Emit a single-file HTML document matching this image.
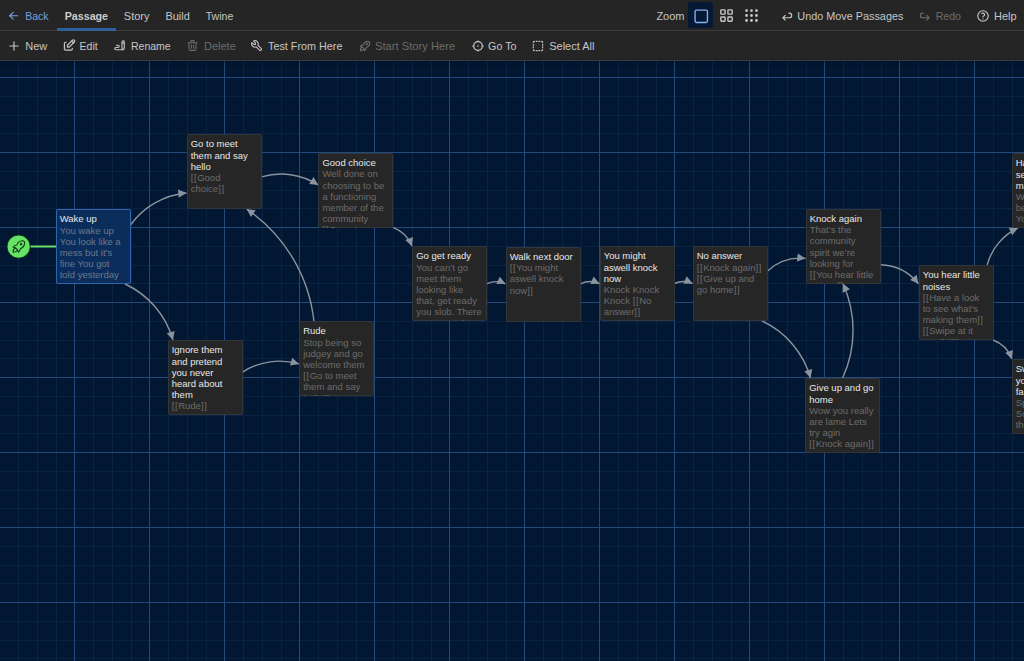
<!DOCTYPE html><html><head><meta charset='utf-8'><style>
*{box-sizing:border-box}
html,body{margin:0;padding:0;width:1024px;height:661px;overflow:hidden;background:#021731;font-family:"Liberation Sans",sans-serif}
.bar{position:absolute;left:0;width:1024px;background:#252525}
.t{position:absolute;white-space:nowrap;font-size:11px;line-height:13px;color:#c6c6c6}
.dim{color:#6b6b6b}
.ic{position:absolute;fill:none;stroke:#c6c6c6;stroke-width:2;stroke-linecap:round;stroke-linejoin:round}
.ic.dim{stroke:#6b6b6b}
.p{position:absolute;width:75px;height:75px;background:#262626;border-radius:2px;overflow:hidden;padding:4.4px 4.2px;font-size:9.5px;line-height:11.2px;white-space:nowrap;box-shadow:inset 0 0 0 1px rgba(130,150,180,0.14)}
.p .h{color:#e8e8e8;font-size:9.5px}
.p .e{color:#6c6c6c}
.b{letter-spacing:.6px}
.p.sel{background:#0a2d5b;box-shadow:inset 0 0 0 1px #3065b0}
.p.sel .e{color:#6a788c}
</style></head><body>
<svg style='position:absolute;left:0;top:0' width='1024' height='661' viewBox='0 0 1024 661'>
<path d='M18.5 61V661 M37.5 61V661 M56.5 61V661 M93.5 61V661 M112.5 61V661 M131.5 61V661 M168.5 61V661 M187.5 61V661 M206.5 61V661 M243.5 61V661 M262.5 61V661 M281.5 61V661 M318.5 61V661 M337.5 61V661 M356.5 61V661 M393.5 61V661 M412.5 61V661 M431.5 61V661 M468.5 61V661 M487.5 61V661 M506.5 61V661 M543.5 61V661 M562.5 61V661 M581.5 61V661 M618.5 61V661 M637.5 61V661 M656.5 61V661 M693.5 61V661 M712.5 61V661 M731.5 61V661 M768.5 61V661 M787.5 61V661 M806.5 61V661 M843.5 61V661 M862.5 61V661 M881.5 61V661 M918.5 61V661 M937.5 61V661 M956.5 61V661 M993.5 61V661 M1012.5 61V661 M0 96.5H1024 M0 115.5H1024 M0 133.5H1024 M0 171.5H1024 M0 190.5H1024 M0 208.5H1024 M0 246.5H1024 M0 265.5H1024 M0 283.5H1024 M0 321.5H1024 M0 340.5H1024 M0 358.5H1024 M0 396.5H1024 M0 415.5H1024 M0 433.5H1024 M0 471.5H1024 M0 490.5H1024 M0 508.5H1024 M0 546.5H1024 M0 565.5H1024 M0 583.5H1024 M0 621.5H1024 M0 640.5H1024 M0 658.5H1024' stroke='#0b2242' stroke-width='1' fill='none'/>
<path d='M-0.5 61V661 M74.5 61V661 M149.5 61V661 M224.5 61V661 M299.5 61V661 M374.5 61V661 M449.5 61V661 M524.5 61V661 M599.5 61V661 M674.5 61V661 M749.5 61V661 M824.5 61V661 M899.5 61V661 M974.5 61V661 M0 77.5H1024 M0 152.5H1024 M0 227.5H1024 M0 302.5H1024 M0 377.5H1024 M0 452.5H1024 M0 527.5H1024 M0 602.5H1024' stroke='#234a7c' stroke-width='1' fill='none'/>
<defs><marker id='ah' markerUnits='userSpaceOnUse' markerWidth='12' markerHeight='12' refX='10' refY='6' orient='auto' viewBox='0 0 12 12'><path d='M1.8,1.9 L10,6 L1.8,10.1 z' fill='#8b939e'/></marker></defs>
<path d='M130.50,225.03 A77.43,77.43 0 0 1 186.50,192.97' stroke='#8b939e' stroke-width='1.4' fill='none' marker-end='url(#ah)'/>
<path d='M125.06,284.00 A88.41,88.41 0 0 1 172.94,340.00' stroke='#8b939e' stroke-width='1.4' fill='none' marker-end='url(#ah)'/>
<path d='M261.50,176.84 A68.79,68.79 0 0 1 318.25,184.91' stroke='#8b939e' stroke-width='1.4' fill='none' marker-end='url(#ah)'/>
<path d='M393.25,227.55 A31.74,31.74 0 0 1 412.00,246.20' stroke='#8b939e' stroke-width='1.4' fill='none' marker-end='url(#ah)'/>
<path d='M487.00,283.70 A22.20,22.20 0 0 1 505.50,283.80' stroke='#8b939e' stroke-width='1.4' fill='none' marker-end='url(#ah)'/>
<path d='M580.50,283.80 A22.80,22.80 0 0 1 599.50,283.70' stroke='#8b939e' stroke-width='1.4' fill='none' marker-end='url(#ah)'/>
<path d='M674.50,283.50 A21.60,21.60 0 0 1 692.50,283.50' stroke='#8b939e' stroke-width='1.4' fill='none' marker-end='url(#ah)'/>
<path d='M767.50,271.06 A48.05,48.05 0 0 1 805.50,258.44' stroke='#8b939e' stroke-width='1.4' fill='none' marker-end='url(#ah)'/>
<path d='M761.96,321.00 A89.87,89.87 0 0 1 810.54,378.00' stroke='#8b939e' stroke-width='1.4' fill='none' marker-end='url(#ah)'/>
<path d='M880.50,264.75 A50.98,50.98 0 0 1 918.50,283.75' stroke='#8b939e' stroke-width='1.4' fill='none' marker-end='url(#ah)'/>
<path d='M842.61,378.00 A113.40,113.40 0 0 0 842.89,283.50' stroke='#8b939e' stroke-width='1.4' fill='none' marker-end='url(#ah)'/>
<path d='M313.94,321.00 A156.85,156.85 0 0 0 246.56,209.00' stroke='#8b939e' stroke-width='1.4' fill='none' marker-end='url(#ah)'/>
<path d='M242.50,372.08 A68.50,68.50 0 0 1 299.00,363.92' stroke='#8b939e' stroke-width='1.4' fill='none' marker-end='url(#ah)'/>
<path d='M987.14,265.00 A57.71,57.71 0 0 1 1017.86,228.00' stroke='#8b939e' stroke-width='1.4' fill='none' marker-end='url(#ah)'/>
<path d='M993.10,340.00 A32.07,32.07 0 0 1 1011.90,359.00' stroke='#8b939e' stroke-width='1.4' fill='none' marker-end='url(#ah)'/>
<path d='M29 246.5H57' stroke='#66e066' stroke-width='2'/>
<circle cx='18.6' cy='246.6' r='11.6' fill='#66e266' stroke='#03200a' stroke-width='0.8'/>
<g transform='translate(10.26,237.86) scale(0.72)' fill='none' stroke='#0d3d12' stroke-width='1.5' stroke-linecap='round' stroke-linejoin='round'><path d='M4 13a8 8 0 0 1 7 7a6 6 0 0 0 3 -5a9 9 0 0 0 6 -8a3 3 0 0 0 -3 -3a9 9 0 0 0 -8 6a6 6 0 0 0 -5 3'/><path d='M7 14a6 6 0 0 0 -3 6a6 6 0 0 0 6 -3'/><circle cx='15' cy='9' r='1'/></g>
</svg>
<div class='p sel' style='left:55.5px;top:209px'><div class='h'>Wake up</div><div class='e'>You wake up</div><div class='e'>You look like a</div><div class='e'>mess but it’s</div><div class='e'>fine You got</div><div class='e'>told yesterday</div></div>
<div class='p' style='left:186.5px;top:134px'><div class='h'>Go to meet</div><div class='h'>them and say</div><div class='h'>hello</div><div class='e'><span class='b'>[[</span>Good</div><div class='e'>choice<span class='b'>]]</span></div></div>
<div class='p' style='left:318.25px;top:152.75px'><div class='h'>Good choice</div><div class='e'>Well done on</div><div class='e'>choosing to be</div><div class='e'>a functioning</div><div class='e'>member of the</div><div class='e'>community</div><div class='e'><span class='b'>[[</span>Go get</div></div>
<div class='p' style='left:412.0px;top:246px'><div class='h'>Go get ready</div><div class='e'>You can’t go</div><div class='e'>meet them</div><div class='e'>looking like</div><div class='e'>that, get ready</div><div class='e'>you slob. There</div><div class='e'><span style='padding-left:46px'>l</span></div></div>
<div class='p' style='left:505.5px;top:246.5px'><div class='h'>Walk next door</div><div class='e'><span class='b'>[[</span>You might</div><div class='e'>aswell knock</div><div class='e'>now<span class='b'>]]</span></div></div>
<div class='p' style='left:599.5px;top:246px'><div class='h'>You might</div><div class='h'>aswell knock</div><div class='h'>now</div><div class='e'>Knock Knock</div><div class='e'>Knock <span class='b'>[[</span>No</div><div class='e'>answer<span class='b'>]]</span></div></div>
<div class='p' style='left:692.5px;top:246px'><div class='h'>No answer</div><div class='e'><span class='b'>[[</span>Knock again<span class='b'>]]</span></div><div class='e'><span class='b'>[[</span>Give up and</div><div class='e'>go home<span class='b'>]]</span></div></div>
<div class='p' style='left:805.5px;top:208.5px'><div class='h'>Knock again</div><div class='e'>That’s the</div><div class='e'>community</div><div class='e'>spirit we’re</div><div class='e'>looking for</div><div class='e'><span class='b'>[[</span>You hear little</div><div class='e'>noises<span class='b'>]]</span></div></div>
<div class='p' style='left:918.5px;top:265px'><div class='h'>You hear little</div><div class='h'>noises</div><div class='e'><span class='b'>[[</span>Have a look</div><div class='e'>to see what’s</div><div class='e'>making them<span class='b'>]]</span></div><div class='e'><span class='b'>[[</span>Swipe at it</div><div class='e'>you fail<span class='b'>]]</span></div></div>
<div class='p' style='left:1011.5px;top:153px'><div class='h'>Have a look to</div><div class='h'>see what’s</div><div class='h'>making them</div><div class='e'>Well</div><div class='e'>be</div><div class='e'>You</div></div>
<div class='p' style='left:1011.5px;top:359px'><div class='h'>Swipe at it</div><div class='h'>you</div><div class='h'>fail</div><div class='e'>Spooky</div><div class='e'>Something</div><div class='e'>them</div></div>
<div class='p' style='left:167.5px;top:340px'><div class='h'>Ignore them</div><div class='h'>and pretend</div><div class='h'>you never</div><div class='h'>heard about</div><div class='h'>them</div><div class='e'><span class='b'>[[</span>Rude<span class='b'>]]</span></div></div>
<div class='p' style='left:299.0px;top:321px'><div class='h'>Rude</div><div class='e'>Stop being so</div><div class='e'>judgey and go</div><div class='e'>welcome them</div><div class='e'><span class='b'>[[</span>Go to meet</div><div class='e'>them and say</div><div class='e'>hello<span class='b'>]]</span></div></div>
<div class='p' style='left:805.0px;top:378px'><div class='h'>Give up and go</div><div class='h'>home</div><div class='e'>Wow you really</div><div class='e'>are lame Lets</div><div class='e'>try agin</div><div class='e'><span class='b'>[[</span>Knock again<span class='b'>]]</span></div></div>
<div class='bar' style='top:0;height:30px'></div>
<div class='bar' style='top:30px;height:1px;background:#3a3a3a'></div>
<div class='bar' style='top:31px;height:29px'></div>
<div class='bar' style='top:60px;height:1px;background:#363b44;box-shadow:0 2px 4px rgba(0,0,0,0.75)'></div>
<div style='position:absolute;left:56.5px;top:28.4px;width:59.5px;height:2.2px;background:#2f5e9c'></div>
<svg class='ic ' style='left:7.35px;top:8.75px;stroke:#74a0dc' width='13.5' height='13.5' viewBox='0 0 24 24'><path d='M5 12l14 0'/><path d='M5 12l6 6'/><path d='M5 12l6 -6'/></svg>
<div class='t ' style='left:25.2px;top:9.50px;color:#74a0dc;font-size:10.5px'>Back</div>
<div class='t ' style='left:64.7px;top:9.50px;font-weight:bold;font-size:10.7px;color:#cdcdcd'>Passage</div>
<div class='t ' style='left:123.8px;top:9.50px;'>Story</div>
<div class='t ' style='left:165.4px;top:9.50px;'>Build</div>
<div class='t ' style='left:205.7px;top:9.50px;font-size:10.6px'>Twine</div>
<div class='t ' style='left:656.4px;top:9.50px;'>Zoom</div>
<div style='position:absolute;left:688.2px;top:2.4px;width:24.9px;height:25.8px;background:#061934;border-radius:3px'></div>
<svg class='ic ' style='left:692.75px;top:7.65px;stroke:#86b0ee' width='16.5' height='16.5' viewBox='0 0 24 24'><path d='M3 5a2 2 0 0 1 2 -2h14a2 2 0 0 1 2 2v14a2 2 0 0 1 -2 2h-14a2 2 0 0 1 -2 -2z'/></svg>
<svg class='ic ' style='left:718.00px;top:6.80px;' width='17' height='17' viewBox='0 0 24 24'><path d='M4 5a1 1 0 0 1 1 -1h4a1 1 0 0 1 1 1v4a1 1 0 0 1 -1 1h-4a1 1 0 0 1 -1 -1z'/><path d='M14 5a1 1 0 0 1 1 -1h4a1 1 0 0 1 1 1v4a1 1 0 0 1 -1 1h-4a1 1 0 0 1 -1 -1z'/><path d='M4 15a1 1 0 0 1 1 -1h4a1 1 0 0 1 1 1v4a1 1 0 0 1 -1 1h-4a1 1 0 0 1 -1 -1z'/><path d='M14 15a1 1 0 0 1 1 -1h4a1 1 0 0 1 1 1v4a1 1 0 0 1 -1 1h-4a1 1 0 0 1 -1 -1z'/></svg>
<svg class='ic ' style='left:743.30px;top:7.10px;' width='17' height='17' viewBox='0 0 24 24'><circle cx='5' cy='5' r='1'/><circle cx='12' cy='5' r='1'/><circle cx='19' cy='5' r='1'/><circle cx='5' cy='12' r='1'/><circle cx='12' cy='12' r='1'/><circle cx='19' cy='12' r='1'/><circle cx='5' cy='19' r='1'/><circle cx='12' cy='19' r='1'/><circle cx='19' cy='19' r='1'/></svg>
<svg class='ic ' style='left:779.70px;top:8.50px;' width='14' height='14' viewBox='0 0 24 24'><path d='M9 11l-4 4l4 4m-4 -4h11a4 4 0 0 0 0 -8h-1'/></svg>
<div class='t ' style='left:797.3px;top:9.50px;font-size:10.85px'>Undo Move Passages</div>
<svg class='ic dim' style='left:917.80px;top:8.50px;' width='14' height='14' viewBox='0 0 24 24'><path d='M15 11l4 4l-4 4m4 -4h-11a4 4 0 0 1 0 -8h1'/></svg>
<div class='t dim' style='left:935.7px;top:9.50px;font-size:10.6px'>Redo</div>
<svg class='ic ' style='left:975.60px;top:8.60px;' width='14' height='14' viewBox='0 0 24 24'><circle cx='12' cy='12' r='9'/><path d='M12 17l0 .01'/><path d='M12 13.5a1.5 1.5 0 0 1 1 -1.5a2.6 2.6 0 1 0 -3 -4'/></svg>
<div class='t ' style='left:994px;top:9.50px;'>Help</div>
<svg class='ic ' style='left:7.40px;top:38.70px;' width='14' height='14' viewBox='0 0 24 24'><path d='M12 5l0 14'/><path d='M5 12l14 0'/></svg>
<div class='t ' style='left:25.2px;top:39.60px;'>New</div>
<svg class='ic ' style='left:62.05px;top:38.25px;' width='14.5' height='14.5' viewBox='0 0 24 24'><path d='M7 7h-1a2 2 0 0 0 -2 2v9a2 2 0 0 0 2 2h9a2 2 0 0 0 2 -2v-1'/><path d='M20.385 6.585a2.1 2.1 0 0 0 -2.97 -2.97l-8.415 8.385v3h3l8.385 -8.415z'/><path d='M16 5l3 3'/></svg>
<div class='t ' style='left:79.6px;top:39.60px;font-size:10.5px'>Edit</div>
<svg class='ic ' style='left:113.25px;top:39.05px;' width='13.5' height='13.5' viewBox='0 0 24 24'><path d='M20 17v-12c0 -1.121 -.879 -2 -2 -2s-2 .879 -2 2v12l2 2l2 -2z'/><path d='M16 7h4'/><path d='M18 19h-13a2 2 0 1 1 0 -4h4a2 2 0 1 0 0 -4h-3'/></svg>
<div class='t ' style='left:131px;top:39.60px;font-size:10.5px'>Rename</div>
<svg class='ic dim' style='left:186.10px;top:39.10px;' width='13' height='13' viewBox='0 0 24 24'><path d='M4 7l16 0'/><path d='M10 11l0 6'/><path d='M14 11l0 6'/><path d='M5 7l1 12a2 2 0 0 0 2 2h8a2 2 0 0 0 2 -2l1 -12'/><path d='M9 7v-3a1 1 0 0 1 1 -1h4a1 1 0 0 1 1 1v3'/></svg>
<div class='t dim' style='left:204px;top:39.60px;'>Delete</div>
<svg class='ic ' style='left:249.80px;top:38.80px;' width='13' height='13' viewBox='0 0 24 24'><path d='M7 10h3v-3l-3.5 -3.5a6 6 0 0 1 8 8l6 6a2 2 0 0 1 -3 3l-6 -6a6 6 0 0 1 -8 -8l3.5 3.5'/></svg>
<div class='t ' style='left:268px;top:39.60px;font-size:10.8px'>Test From Here</div>
<svg class='ic dim' style='left:358.30px;top:38.50px;' width='14' height='14' viewBox='0 0 24 24'><path d='M4 13a8 8 0 0 1 7 7a6 6 0 0 0 3 -5a9 9 0 0 0 6 -8a3 3 0 0 0 -3 -3a9 9 0 0 0 -8 6a6 6 0 0 0 -5 3'/><path d='M7 14a6 6 0 0 0 -3 6a6 6 0 0 0 6 -3'/><circle cx='15' cy='9' r='1'/></svg>
<div class='t dim' style='left:375px;top:39.60px;font-size:11.2px'>Start Story Here</div>
<svg class='ic' style='left:469.8px;top:38px' width='16' height='16' viewBox='0 0 16 16'><circle cx='8' cy='8' r='4.3' stroke-width='1.25'/><circle cx='8' cy='8' r='0.75' fill='#cfcfcf' stroke='none'/><path d='M8 2.4V3.4M8 12.6V13.6M2.4 8H3.4M12.6 8H13.6' stroke-width='1.25' stroke-linecap='butt'/></svg>
<div class='t ' style='left:488.1px;top:39.60px;font-size:10.7px'>Go To</div>
<svg class='ic ' style='left:531.40px;top:38.50px;' width='14' height='14' viewBox='0 0 24 24'><path d='M4 6a2 2 0 0 1 2 -2m3 0h1.5m3 0h1.5m3 0a2 2 0 0 1 2 2m0 3v1.5m0 3v1.5m0 3a2 2 0 0 1 -2 2m-3 0h-1.5m-3 0h-1.5m-3 0a2 2 0 0 1 -2 -2m0 -3v-1.5m0 -3v-1.5m0 -3'/></svg>
<div class='t ' style='left:549.2px;top:39.60px;'>Select All</div>
</body></html>
